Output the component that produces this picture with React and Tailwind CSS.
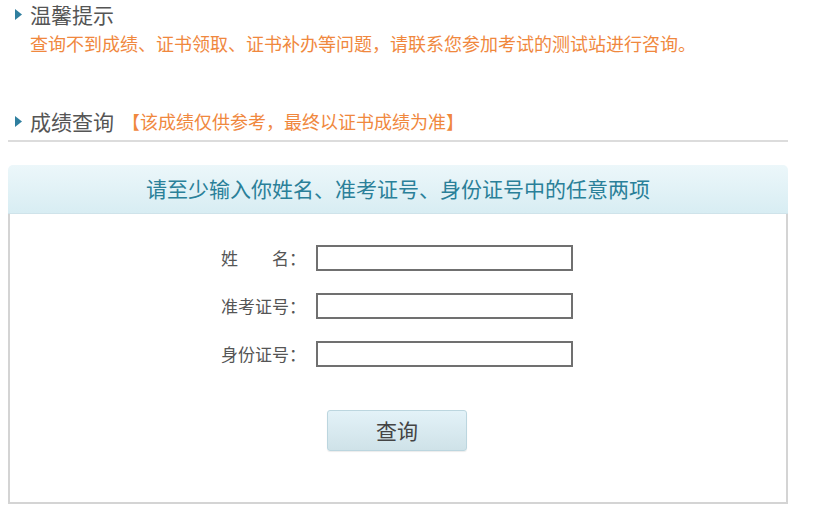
import React from "react";

const font = { fontFamily: '"Microsoft YaHei", "Noto Sans CJK SC", sans-serif' };

const Arrow = () => (
  <svg width="7" height="11" viewBox="0 0 7 11" className="shrink-0">
    <polygon points="0,0 7,5.5 0,11" fill="#2f7f9f" />
  </svg>
);

const fields = [
  { label: "姓　　名：", name: "name" },
  { label: "准考证号：", name: "ticket" },
  { label: "身份证号：", name: "idcard" },
];

export default function App() {
  return (
    <div className="w-[824px] h-[510px] bg-white overflow-hidden" style={font}>
      <div className="pl-[15px] pt-[2px]">
        <div className="flex items-center gap-[8px] h-[24px]">
          <Arrow />
          <span className="text-[21px] leading-[24px] text-[#555]">温馨提示</span>
        </div>
        <div className="pl-[15px] mt-[6px] text-[18px] leading-[22px] text-[#f0883e]">
          查询不到成绩、证书领取、证书补办等问题，请联系您参加考试的测试站进行咨询。
        </div>
      </div>

      <div className="pl-[15px] mt-[54px] flex items-center gap-[8px] h-[26px]">
        <Arrow />
        <span className="text-[21px] leading-[24px] text-[#555]">成绩查询</span>
        <span className="text-[18px] leading-[24px] text-[#f0883e]">
          【该成绩仅供参考，最终以证书成绩为准】
        </span>
      </div>
      <div className="ml-[8px] mt-[6px] w-[780px] h-[2px] bg-[#dcdcdc]" />

      <div className="ml-[8px] mt-[23px] w-[780px]">
        <div className="h-[49px] rounded-t-[5px] bg-gradient-to-b from-[#ecf7fa] to-[#d8edf3] border-b border-[#cfe3ea] flex items-center justify-center">
          <span className="text-[21px] text-[#2a8099]">
            请至少输入你姓名、准考证号、身份证号中的任意两项
          </span>
        </div>
        <div className="h-[290px] border-2 border-t-0 border-[#d4d4d4] bg-white">
          <div className="pt-[31px] flex flex-col gap-[22px]">
            {fields.map((f) => (
              <div key={f.name} className="flex items-center h-[26px]">
                <label className="w-[296px] text-right text-[17px] text-[#555]">{f.label}</label>
                <input
                  name={f.name}
                  className="ml-[10px] w-[257px] h-[26px] border-2 border-[#707070] outline-none"
                />
              </div>
            ))}
          </div>
          <div className="mt-[43px] pl-[317px]">
            <button className="w-[140px] h-[41px] rounded-[3px] border border-[#bcd6df] bg-gradient-to-b from-[#e3f2f8] to-[#cfe2e8] text-[21px] text-[#444] shadow-[0_1px_1px_rgba(0,0,0,0.08)]">
              查询
            </button>
          </div>
        </div>
      </div>
    </div>
  );
}
